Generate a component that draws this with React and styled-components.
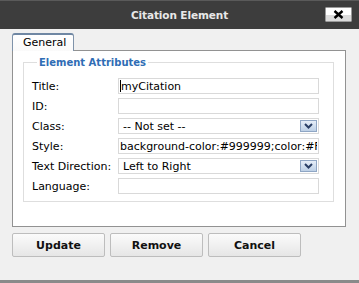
import React from "react";
import styled, { createGlobalStyle } from "styled-components";

const GlobalStyle = createGlobalStyle`
	html, body {
		margin: 0;
		padding: 0;
		background: #f0f0f0;
		overflow: hidden;
	}
	body {
		font-family: "DejaVu Sans", Verdana, sans-serif;
		font-size: 11px;
		color: #000;
	}
`;

const Window = styled.div`
	width: 359px;
	height: 283px;
	box-sizing: border-box;
	background: #f0f0f0;
	border-bottom: 3px solid #8a8a8a;
	display: flex;
	flex-direction: column;
`;

const TitleBar = styled.div`
	height: 29px;
	flex: none;
	background: #3d3d3d;
	border-top: 1px solid #5a5a5a;
	box-sizing: border-box;
	display: grid;
	grid-template-columns: 1fr auto 1fr;
	align-items: center;
`;

const Title = styled.div`
	grid-column: 2;
	color: #e8e8e8;
	font-weight: bold;
	font-size: 10.5px;
	letter-spacing: -0.1px;
	padding-bottom: 1px;
`;

const CloseButton = styled.button`
	grid-column: 3;
	justify-self: end;
	margin-right: 7px;
	margin-bottom: 2px;
	width: 27px;
	height: 15px;
	padding: 0;
	border: 1px solid #9a9a9a;
	border-radius: 1px;
	background: linear-gradient(#ffffff 0%, #ffffff 50%, #dcdcdc 51%, #dcdcdc 100%);
	display: flex;
	align-items: center;
	justify-content: center;
`;

const Body = styled.div`
	padding: 4px 13px 0 12px;
	display: flex;
	flex-direction: column;
`;

const Tabs = styled.div`
	display: flex;
	height: 17px;
`;

const Tab = styled.div`
	width: 62px;
	box-sizing: border-box;
	border: 1px solid #7f93aa;
	border-bottom: none;
	border-top: 2px solid #6f87a3;
	border-radius: 3px 3px 0 0;
	background: linear-gradient(#ffffff, #fafafa);
	padding: 1px 0 0 10px;
	font-size: 11px;
	position: relative;
	z-index: 1;
	margin-bottom: -1px;
	height: 18px;
`;

const Panel = styled.div`
	height: 177px;
	box-sizing: border-box;
	background: #ffffff;
	border: 1px solid #929292;
	padding: 6px 11px 0 10px;
`;

const Fieldset = styled.fieldset`
	margin: 0;
	padding: 10px 15px 7px 8px;
	border: 1px solid #dedede;
	min-width: 0;
`;

const Legend = styled.legend`
	color: #2f6db5;
	font-weight: bold;
	font-size: 10px;
	padding: 0 2px;
	margin-left: 5px;
`;

const Grid = styled.div`
	display: grid;
	grid-template-columns: 86px 201px;
	grid-auto-rows: 16px;
	row-gap: 4px;
	align-items: center;
`;

const Label = styled.label`
	font-size: 11px;
	white-space: nowrap;
`;

const Field = styled.div`
	height: 16px;
	box-sizing: border-box;
	border: 1px solid #d9d9d9;
	background: #fff;
	display: flex;
	align-items: center;
	padding-left: ${(p) => (p.$select ? "4px" : "1px")};
	padding-right: 1px;
	overflow: hidden;
	white-space: nowrap;
	font-size: 11px;
`;

const Value = styled.span`
	flex: 1;
	overflow: hidden;
	white-space: nowrap;
`;

const Caret = styled.span`
	display: inline-block;
	width: 1px;
	height: 12px;
	background: #000;
	vertical-align: -2px;
`;

const ArrowBox = styled.span`
	flex: none;
	width: 17px;
	height: 12px;
	box-sizing: border-box;
	border: 1px solid #8fa6c4;
	background: linear-gradient(#e6eef8, #bdd0e6);
	display: flex;
	align-items: center;
	justify-content: center;
`;

const Buttons = styled.div`
	display: flex;
	gap: 5px;
	margin-top: 6px;
`;

const Button = styled.button`
	width: 93px;
	height: 24px;
	border: 1px solid #bdbdbd;
	border-radius: 2px;
	background: linear-gradient(#fbfbfb, #e6e6e6);
	font-family: "DejaVu Sans", Verdana, sans-serif;
	font-weight: bold;
	font-size: 11px;
	color: #111;
	padding: 0;
`;

const Chevron = () => (
	<svg width="9" height="6" viewBox="0 0 9 6">
		<path d="M1 1 L4.5 4.5 L8 1" fill="none" stroke="#2a3f66" strokeWidth="2" />
	</svg>
);

const CloseX = () => (
	<svg width="11" height="9" viewBox="0 0 11 9">
		<path d="M1.5 1 L9.5 8 M9.5 1 L1.5 8" stroke="#000" strokeWidth="2.4" />
	</svg>
);

const rows = [
	{ label: "Title:", value: "myCitation", caret: true },
	{ label: "ID:", value: "" },
	{ label: "Class:", value: "-- Not set --", select: true },
	{ label: "Style:", value: "background-color:#999999;color:#FFFFFF" },
	{ label: "Text Direction:", value: "Left to Right", select: true },
	{ label: "Language:", value: "" },
];

export default function App() {
	return (
		<>
			<GlobalStyle />
			<Window>
				<TitleBar>
					<Title>Citation Element</Title>
					<CloseButton>
						<CloseX />
					</CloseButton>
				</TitleBar>
				<Body>
					<Tabs>
						<Tab>General</Tab>
					</Tabs>
					<Panel>
						<Fieldset>
							<Legend>Element Attributes</Legend>
							<Grid>
								{rows.map((r) => (
									<React.Fragment key={r.label}>
										<Label>{r.label}</Label>
										<Field $select={r.select}>
											<Value>
												{r.caret && <Caret />}
												{r.value}
											</Value>
											{r.select && (
												<ArrowBox>
													<Chevron />
												</ArrowBox>
											)}
										</Field>
									</React.Fragment>
								))}
							</Grid>
						</Fieldset>
					</Panel>
					<Buttons>
						<Button>Update</Button>
						<Button>Remove</Button>
						<Button>Cancel</Button>
					</Buttons>
				</Body>
			</Window>
		</>
	);
}
